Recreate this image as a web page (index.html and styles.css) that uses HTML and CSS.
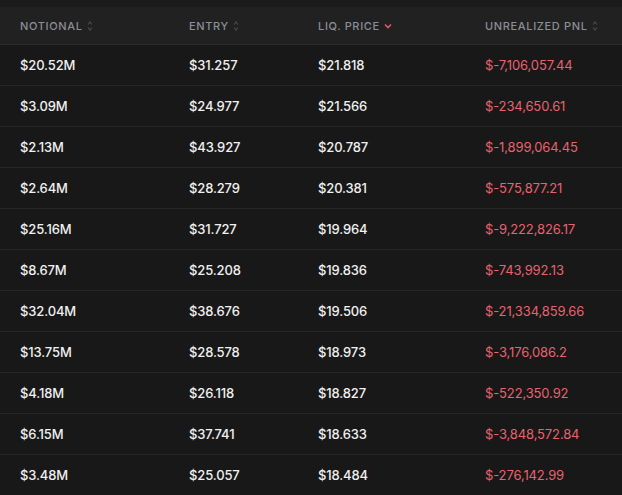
FILE: index.html
```html
<!DOCTYPE html>
<html>
<head>
<meta charset="utf-8">
<link rel="stylesheet" href="styles.css">
</head>
<body>
<div class="wrap">
  <table class="tbl">
    <thead>
      <tr>
        <th class="c1"><span class="h">NOTIONAL <svg class="sort" viewBox="0 0 6 12"><path d="M1 4.5 L3 2 L5 4.5 M1 7.5 L3 10 L5 7.5" fill="none" stroke="currentColor" stroke-width="1.1"/></svg></span></th>
        <th class="c2"><span class="h">ENTRY <svg class="sort" viewBox="0 0 6 12"><path d="M1 4.5 L3 2 L5 4.5 M1 7.5 L3 10 L5 7.5" fill="none" stroke="currentColor" stroke-width="1.1"/></svg></span></th>
        <th class="c3"><span class="h">LIQ. PRICE <svg class="down" viewBox="0 0 8 6"><path d="M1 1.5 L4 4.5 L7 1.5" fill="none" stroke="currentColor" stroke-width="1.6"/></svg></span></th>
        <th class="c4"><span class="h">UNREALIZED PNL <svg class="sort" viewBox="0 0 6 12"><path d="M1 4.5 L3 2 L5 4.5 M1 7.5 L3 10 L5 7.5" fill="none" stroke="currentColor" stroke-width="1.1"/></svg></span></th>
      </tr>
    </thead>
    <tbody>
      <tr><td>$20.52M</td><td>$31.257</td><td>$21.818</td><td class="neg">$-7,106,057.44</td></tr>
      <tr><td>$3.09M</td><td>$24.977</td><td>$21.566</td><td class="neg">$-234,650.61</td></tr>
      <tr><td>$2.13M</td><td>$43.927</td><td>$20.787</td><td class="neg">$-1,899,064.45</td></tr>
      <tr><td>$2.64M</td><td>$28.279</td><td>$20.381</td><td class="neg">$-575,877.21</td></tr>
      <tr><td>$25.16M</td><td>$31.727</td><td>$19.964</td><td class="neg">$-9,222,826.17</td></tr>
      <tr><td>$8.67M</td><td>$25.208</td><td>$19.836</td><td class="neg">$-743,992.13</td></tr>
      <tr><td>$32.04M</td><td>$38.676</td><td>$19.506</td><td class="neg">$-21,334,859.66</td></tr>
      <tr><td>$13.75M</td><td>$28.578</td><td>$18.973</td><td class="neg">$-3,176,086.2</td></tr>
      <tr><td>$4.18M</td><td>$26.118</td><td>$18.827</td><td class="neg">$-522,350.92</td></tr>
      <tr><td>$6.15M</td><td>$37.741</td><td>$18.633</td><td class="neg">$-3,848,572.84</td></tr>
      <tr><td>$3.48M</td><td>$25.057</td><td>$18.484</td><td class="neg">$-276,142.99</td></tr>
    </tbody>
  </table>
</div>
</body>
</html>
```
FILE: styles.css
```css
html, body {
  margin: 0;
  padding: 0;
  background: #181818;
}
.wrap {
  width: 622px;
  height: 495px;
  overflow: hidden;
  background: #181818;
  border-top: 7px solid #1b1b1b;
  box-sizing: border-box;
}
.tbl {
  width: 100%;
  border-collapse: collapse;
  table-layout: fixed;
  font-family: Inter, "Liberation Sans", sans-serif;
}
.tbl th {
  background: #212121;
  height: 37px;
  padding: 0;
  text-align: left;
  font-size: 11px;
  font-weight: 500;
  letter-spacing: 0.06em;
  color: #8b8e96;
  border-bottom: 1px solid #2b2b2b;
}
.h {
  display: inline-flex;
  align-items: center;
  gap: 4px;
}
.sort {
  width: 6px;
  height: 12px;
  color: #4c4c4c;
}
.down {
  width: 8px;
  height: 6px;
  color: #e5566b;
}
.c1 { width: 169px; }
.c2 { width: 129px; }
.c3 { width: 167px; }
.c4 { width: auto; }
.tbl th:first-child, .tbl td:first-child { padding-left: 20px; }
.tbl td {
  height: 40px;
  padding: 0;
  font-size: 13px;
  font-weight: 500;
  letter-spacing: -0.01em;
  color: #f0f0f0;
  border-bottom: 1px solid #262626;
}
.tbl td.neg { color: #e8626f; font-weight: 400; }
```
